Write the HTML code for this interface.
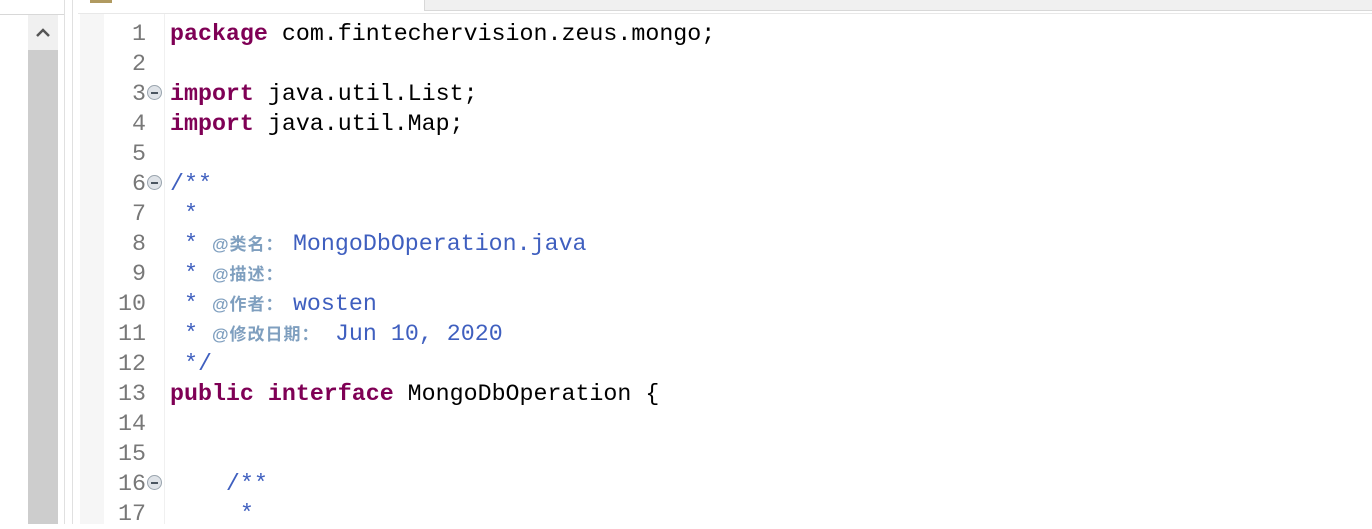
<!DOCTYPE html>
<html><head><meta charset="utf-8"><style>
body{margin:0;width:1372px;height:524px;overflow:hidden;background:#fff;position:relative;font-family:"Liberation Mono",monospace}
.a{position:absolute}
.ln{position:absolute;left:100px;width:46px;text-align:right;font-size:23.3px;color:#787878;line-height:30px}
.code{position:absolute;left:170px;font-size:23.3px;line-height:30px;white-space:pre;color:#000}
.k{color:#7f0055;font-weight:bold}
.c{color:#3f5fbf}
.t{display:inline-block;vertical-align:top;height:30px;line-height:32px;overflow:hidden;color:#7f9fbf;font-family:"Liberation Sans","Noto Sans CJK SC",sans-serif;font-size:17px;letter-spacing:1px;font-weight:bold;white-space:nowrap}
.f{position:absolute;left:147px;width:15px;height:15px;border-radius:50%;background:#dfe3e8;border:1px solid #9aa4ae;box-sizing:border-box}
.f:after{content:"";position:absolute;left:3px;top:6px;width:7px;height:1.5px;background:#4a5560}
</style></head><body>
<div class="a" style="left:0;top:0;width:64px;height:14px;background:#fff;border-bottom:1px solid #d8d8d8"></div>
<div class="a" style="left:28px;top:15px;width:30px;height:509px;background:#f0f0f0"></div>
<div class="a" style="left:28px;top:50px;width:30px;height:474px;background:#cdcdcd"></div>
<svg class="a" style="left:33px;top:26px" width="20" height="14"><path d="M4 10 L10 4 L16 10" fill="none" stroke="#555" stroke-width="2.5"/></svg>
<div class="a" style="left:64px;top:0;width:1px;height:524px;background:#e0e0e0"></div>
<div class="a" style="left:72px;top:0;width:1px;height:524px;background:#e0e0e0"></div>
<div class="a" style="left:424px;top:0;width:948px;height:10px;background:#f0f0f0;border:1px solid #d8d8d8;border-top:none"></div>
<div class="a" style="left:90px;top:0;width:22px;height:3px;background:#b09a60"></div>
<div class="a" style="left:78px;top:13px;width:1294px;height:1px;background:#e8e8e8"></div>
<div class="a" style="left:80px;top:14px;width:24px;height:510px;background:#f6f6f6"></div>
<div class="a" style="left:164px;top:14px;width:1px;height:510px;background:#f0f0f0"></div>
<div class="ln" style="top:19px">1<br>2<br>3<br>4<br>5<br>6<br>7<br>8<br>9<br>10<br>11<br>12<br>13<br>14<br>15<br>16<br>17</div>
<div class="f" style="top:85px"></div><div class="f" style="top:175px"></div><div class="f" style="top:475px"></div>
<div class="code" style="top:19px"><span class="k">package</span> com.fintechervision.zeus.mongo;

<span class="k">import</span> java.util.List;
<span class="k">import</span> java.util.Map;

<span class="c">/**</span>
<span class="c"> *</span>
<span class="c"> * <span class="t" style="width:81px">@类名：</span>MongoDbOperation.java</span>
<span class="c"> * <span class="t" style="width:81px">@描述：</span></span>
<span class="c"> * <span class="t" style="width:81px">@作者：</span>wosten</span>
<span class="c"> * <span class="t" style="width:123px">@修改日期：</span>Jun 10, 2020</span>
<span class="c"> */</span>
<span class="k">public</span> <span class="k">interface</span> MongoDbOperation {


<span class="c">    /**</span>
<span class="c">     *</span></div>
</body></html>
